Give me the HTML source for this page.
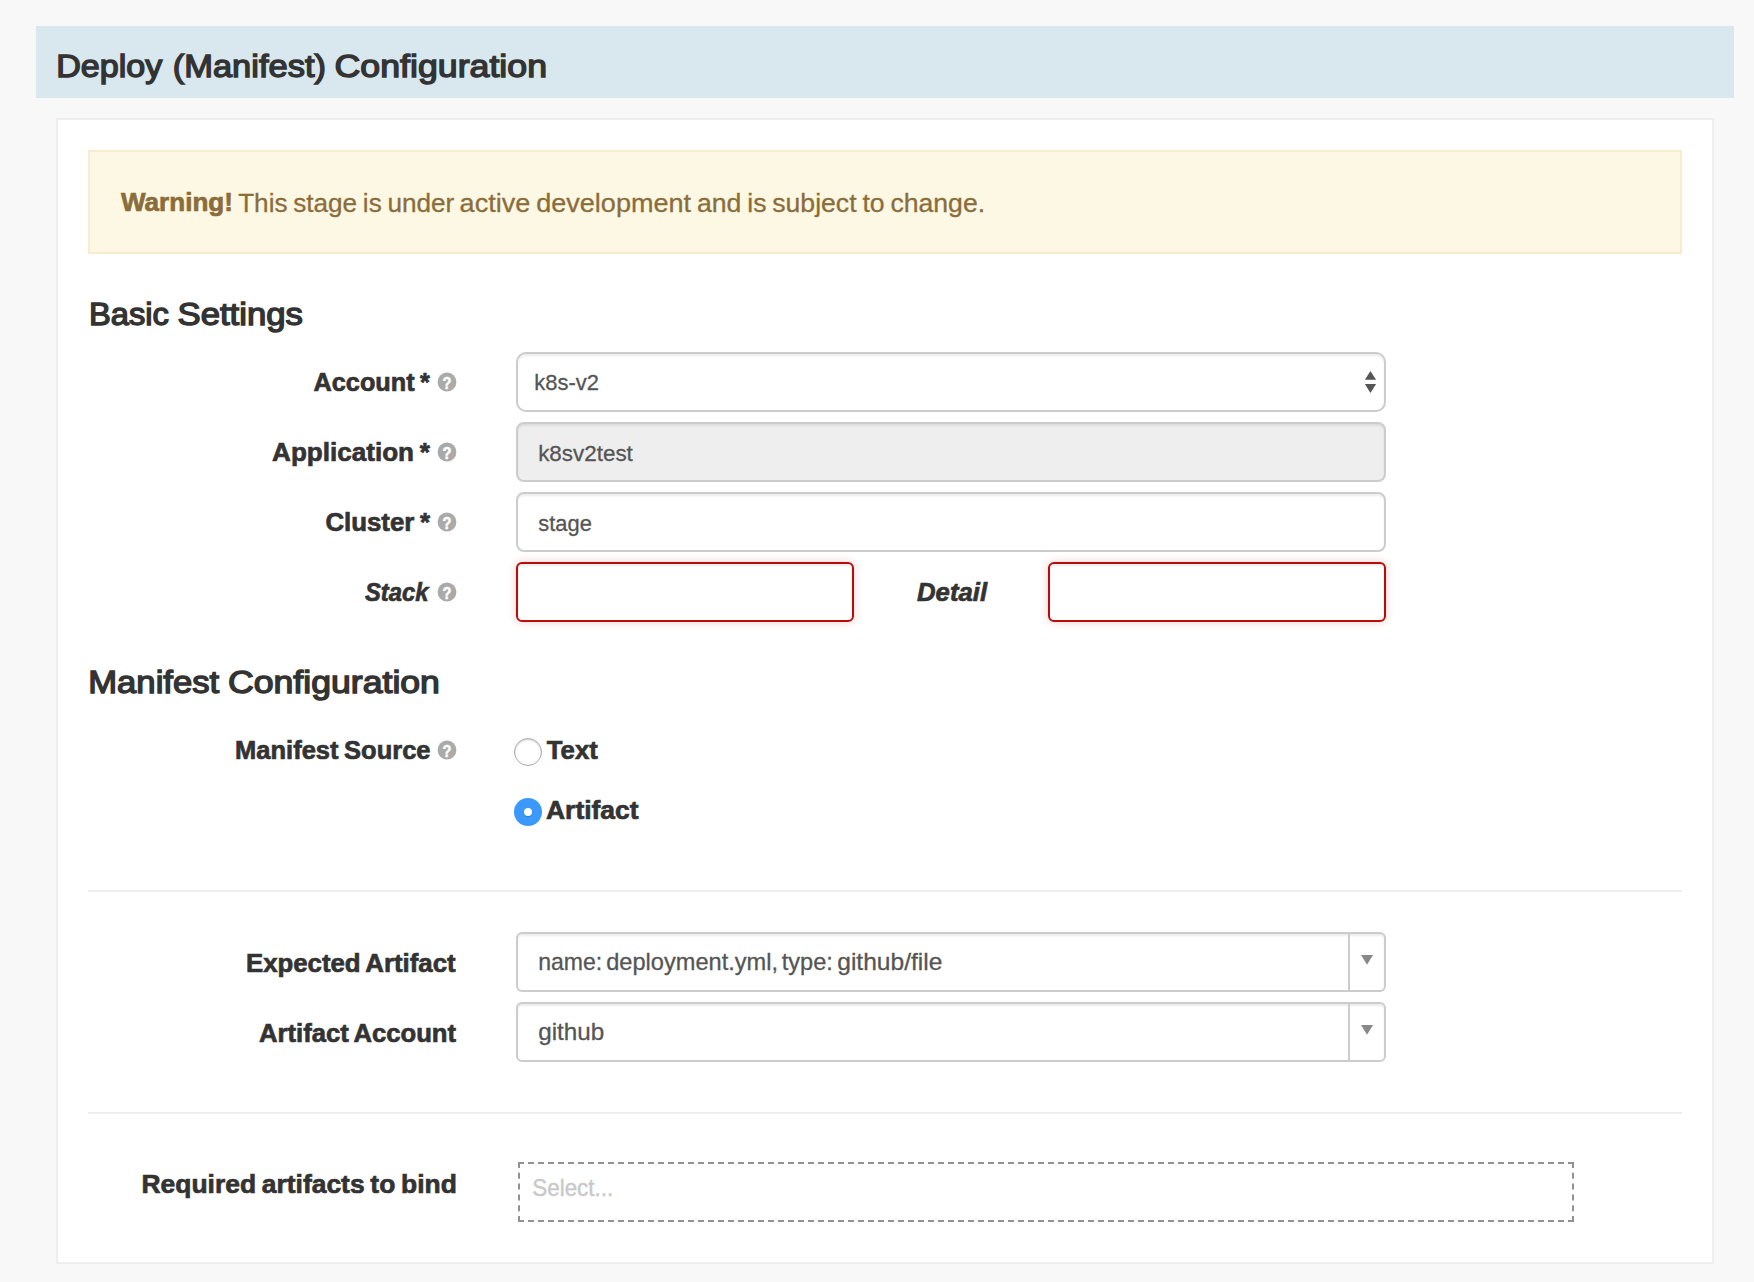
<!DOCTYPE html>
<html lang="en">
<head>
<meta charset="utf-8">
<title>Deploy (Manifest) Configuration</title>
<style>
html,body{margin:0;padding:0;}
body{width:1754px;height:1282px;overflow:hidden;background:#f8f8f8;position:relative;font-family:"Liberation Sans",sans-serif;}
.abs,.t,.help{position:absolute;}
.t{white-space:nowrap;transform-origin:0 50%;word-spacing:-0.06em;}
.bar{left:36px;top:26px;width:1698px;height:72px;background:#d9e8ee;}
.panel{left:56px;top:118px;width:1654px;height:1142px;background:#fff;border:2px solid #eee;}
.alert{left:88px;top:150px;width:1590px;height:100px;background:#fdf8e4;border:2px solid #faebcc;}
.inp{box-sizing:border-box;height:60px;background:#fff;border:2px solid #ccc;border-radius:8px;box-shadow:inset 0 2px 2px rgba(0,0,0,.075);}
.inp.dis{background:#eee;}
.inp.sel{border-radius:10px;}
.inp.err{border-color:#b80c09;border-radius:6px;box-shadow:inset 0 2px 2px rgba(0,0,0,.075),0 0 9px rgba(200,20,20,.22);}
.inp.ui{border-radius:6px;}
.div{width:2px;height:56px;background:#ccc;}
.hr{left:88px;width:1594px;height:2px;background:#eee;}
.dash{box-sizing:border-box;left:518px;top:1162px;width:1056px;height:60px;border:2px dashed #929292;background:#fff;}
.radio{box-sizing:border-box;width:28px;height:28px;border-radius:50%;}
.radio.off{border:1.5px solid #a9a9a9;background:#fff;box-shadow:inset 0 1px 2px rgba(0,0,0,.2);}
.radio.on{background:#3b99fc;}
.radio.on i{position:absolute;left:9.7px;top:9.7px;width:8.6px;height:8.6px;border-radius:50%;background:#fff;box-shadow:0 1px 1px rgba(0,0,0,.2);}
svg{display:block;overflow:visible;}
</style>
</head>
<body>
<div class="abs bar"></div>
<div class="abs panel"></div>
<div class="abs alert"></div>

<div class="abs inp sel" style="left:516px;top:352px;width:870px;"></div>
<svg class="abs" style="left:1364px;top:370px" width="13" height="24" viewBox="0 0 13 24"><path d="M6.4 0.9 L12.1 9.8 L0.9 9.8 Z M0.9 14.1 L12.1 14.1 L6.4 23 Z" fill="#555"/></svg>
<div class="abs inp dis" style="left:516px;top:422px;width:870px;"></div>
<div class="abs inp" style="left:516px;top:492px;width:870px;"></div>
<div class="abs inp err" style="left:516px;top:562px;width:338px;"></div>
<div class="abs inp err" style="left:1048px;top:562px;width:338px;"></div>

<div class="abs radio off" style="left:514px;top:738px;"></div>
<div class="abs radio on" style="left:514px;top:798px;"><i></i></div>

<div class="abs hr" style="top:890px;"></div>

<div class="abs inp ui" style="left:516px;top:932px;width:870px;"></div>
<div class="abs div" style="left:1348px;top:934px;"></div>
<svg class="abs" style="left:1360px;top:954px" width="14" height="12" viewBox="0 0 14 12"><path d="M1 1.1 L13.1 1.1 L7 10.8 Z" fill="#888"/></svg>
<div class="abs inp ui" style="left:516px;top:1002px;width:870px;"></div>
<div class="abs div" style="left:1348px;top:1004px;"></div>
<svg class="abs" style="left:1360px;top:1024px" width="14" height="12" viewBox="0 0 14 12"><path d="M1 1.1 L13.1 1.1 L7 10.8 Z" fill="#888"/></svg>

<div class="abs hr" style="top:1112px;"></div>
<div class="abs dash"></div>

<svg class="help" style="left:436.8px;top:372.3px" width="20" height="20" viewBox="0 0 20 20"><circle cx="10" cy="10" r="9.4" fill="#aaa"/><text x="10" y="17" text-anchor="middle" transform="translate(10 0) scale(0.86 1) translate(-10 0)" font-family="Liberation Sans, sans-serif" font-weight="bold" font-size="17" fill="#fff" stroke="#fff" stroke-width="0.55">?</text></svg>
<svg class="help" style="left:436.8px;top:442.3px" width="20" height="20" viewBox="0 0 20 20"><circle cx="10" cy="10" r="9.4" fill="#aaa"/><text x="10" y="17" text-anchor="middle" transform="translate(10 0) scale(0.86 1) translate(-10 0)" font-family="Liberation Sans, sans-serif" font-weight="bold" font-size="17" fill="#fff" stroke="#fff" stroke-width="0.55">?</text></svg>
<svg class="help" style="left:436.8px;top:512.3px" width="20" height="20" viewBox="0 0 20 20"><circle cx="10" cy="10" r="9.4" fill="#aaa"/><text x="10" y="17" text-anchor="middle" transform="translate(10 0) scale(0.86 1) translate(-10 0)" font-family="Liberation Sans, sans-serif" font-weight="bold" font-size="17" fill="#fff" stroke="#fff" stroke-width="0.55">?</text></svg>
<svg class="help" style="left:436.8px;top:582.3px" width="20" height="20" viewBox="0 0 20 20"><circle cx="10" cy="10" r="9.4" fill="#aaa"/><text x="10" y="17" text-anchor="middle" transform="translate(10 0) scale(0.86 1) translate(-10 0)" font-family="Liberation Sans, sans-serif" font-weight="bold" font-size="17" fill="#fff" stroke="#fff" stroke-width="0.55">?</text></svg>
<svg class="help" style="left:436.8px;top:740.3px" width="20" height="20" viewBox="0 0 20 20"><circle cx="10" cy="10" r="9.4" fill="#aaa"/><text x="10" y="17" text-anchor="middle" transform="translate(10 0) scale(0.86 1) translate(-10 0)" font-family="Liberation Sans, sans-serif" font-weight="bold" font-size="17" fill="#fff" stroke="#fff" stroke-width="0.55">?</text></svg>

<span class="t" id="t_title1" style="left:56px;top:47px;font-size:32.0px;line-height:38.4px;color:#333;transform:translate(0.25px,0.00px) scaleX(1.0652);-webkit-text-stroke:1.4px #333;">Deploy</span>
<span class="t" id="t_title2" style="left:172px;top:47px;font-size:32.0px;line-height:38.4px;color:#333;transform:translate(0.75px,0.00px) scaleX(1.0768);-webkit-text-stroke:1.4px #333;">(Manifest)</span>
<span class="t" id="t_title3" style="left:334px;top:47px;font-size:32.0px;line-height:38.4px;color:#333;transform:translate(0.50px,0.00px) scaleX(1.1164);-webkit-text-stroke:1.4px #333;">Configuration</span>
<span class="t" id="t_warn1" style="left:121px;top:187px;font-size:26.4px;line-height:31.7px;color:#8a6d3b;transform:translate(0.00px,0.00px) scaleX(0.9870);-webkit-text-stroke:0.7px #8a6d3b;"><b>Warning!</b></span>
<span class="t" id="t_warn2" style="left:238px;top:188px;font-size:26.4px;line-height:31.7px;color:#8a6d3b;transform:translate(0.15px,0.00px) scaleX(0.9902);-webkit-text-stroke:0.3px #8a6d3b;">This stage is under</span>
<span class="t" id="t_warn3" style="left:459px;top:188px;font-size:26.4px;line-height:31.7px;color:#8a6d3b;transform:translate(0.60px,0.00px) scaleX(1.0253);-webkit-text-stroke:0.3px #8a6d3b;">active development</span>
<span class="t" id="t_warn4" style="left:697px;top:188px;font-size:26.4px;line-height:31.7px;color:#8a6d3b;transform:translate(0.00px,0.00px) scaleX(1.0087);-webkit-text-stroke:0.3px #8a6d3b;">and is subject to change.</span>
<span class="t" id="t_basic1" style="left:89px;top:295px;font-size:32.0px;line-height:38.4px;color:#333;transform:translate(0.00px,0.00px) scaleX(1.0217);-webkit-text-stroke:1.4px #333;">Basic</span>
<span class="t" id="t_basic2" style="left:177px;top:295px;font-size:32.0px;line-height:38.4px;color:#333;transform:translate(0.50px,0.00px) scaleX(1.0848);-webkit-text-stroke:1.4px #333;">Settings</span>
<span class="t" id="t_account" style="left:313px;top:367px;font-size:26.4px;line-height:31.7px;color:#333;transform:translate(0.60px,0.00px) scaleX(0.9567);font-weight:bold;-webkit-text-stroke:0.7px #333;">Account *</span>
<span class="t" id="t_app" style="left:272px;top:437px;font-size:26.4px;line-height:31.7px;color:#333;transform:translate(0.10px,0.00px) scaleX(0.9875);font-weight:bold;-webkit-text-stroke:0.7px #333;">Application *</span>
<span class="t" id="t_cluster" style="left:325px;top:507px;font-size:26.4px;line-height:31.7px;color:#333;transform:translate(0.40px,0.00px) scaleX(0.9778);font-weight:bold;-webkit-text-stroke:0.7px #333;">Cluster *</span>
<span class="t" id="t_stack" style="left:364px;top:577px;font-size:26.4px;line-height:31.7px;color:#333;transform:translate(0.95px,0.00px) scaleX(0.9002);font-weight:bold;font-style:italic;-webkit-text-stroke:0.7px #333;">Stack</span>
<span class="t" id="t_detail" style="left:917px;top:577px;font-size:26.4px;line-height:31.7px;color:#333;transform:translate(0.05px,0.00px) scaleX(0.9740);font-weight:bold;font-style:italic;-webkit-text-stroke:0.7px #333;">Detail</span>
<span class="t" id="t_k8s" style="left:534px;top:369px;font-size:22.6px;line-height:27.1px;color:#555;transform:translate(0.30px,0.00px) scaleX(0.9715);-webkit-text-stroke:0.3px #555;">k8s-v2</span>
<span class="t" id="t_k8sv2test" style="left:538px;top:440px;font-size:22.6px;line-height:27.1px;color:#555;transform:translate(0.15px,0.00px) scaleX(0.9920);-webkit-text-stroke:0.3px #555;">k8sv2test</span>
<span class="t" id="t_stage" style="left:538px;top:510px;font-size:22.6px;line-height:27.1px;color:#555;transform:translate(0.35px,0.00px) scaleX(0.9676);-webkit-text-stroke:0.3px #555;">stage</span>
<span class="t" id="t_manifest1" style="left:88px;top:663px;font-size:32.0px;line-height:38.4px;color:#333;transform:translate(0.25px,0.00px) scaleX(1.0825);-webkit-text-stroke:1.4px #333;">Manifest</span>
<span class="t" id="t_manifest2" style="left:228px;top:663px;font-size:32.0px;line-height:38.4px;color:#333;transform:translate(0.00px,0.00px) scaleX(1.1134);-webkit-text-stroke:1.4px #333;">Configuration</span>
<span class="t" id="t_msrc" style="left:235px;top:735px;font-size:26.4px;line-height:31.7px;color:#333;transform:translate(0.10px,0.00px) scaleX(0.9660);font-weight:bold;-webkit-text-stroke:0.7px #333;">Manifest Source</span>
<span class="t" id="t_text" style="left:546px;top:735px;font-size:26.4px;line-height:31.7px;color:#333;transform:translate(0.80px,0.00px) scaleX(0.9740);font-weight:bold;-webkit-text-stroke:0.7px #333;">Text</span>
<span class="t" id="t_artifact" style="left:546px;top:795px;font-size:26.4px;line-height:31.7px;color:#333;transform:translate(0.00px,0.00px) scaleX(1.0022);font-weight:bold;-webkit-text-stroke:0.7px #333;">Artifact</span>
<span class="t" id="t_expected" style="left:245px;top:948px;font-size:26.4px;line-height:31.7px;color:#333;transform:translate(0.95px,0.00px) scaleX(0.9773);font-weight:bold;-webkit-text-stroke:0.7px #333;">Expected Artifact</span>
<span class="t" id="t_aacct" style="left:259px;top:1018px;font-size:26.4px;line-height:31.7px;color:#333;transform:translate(0.05px,0.00px) scaleX(0.9717);font-weight:bold;-webkit-text-stroke:0.7px #333;">Artifact Account</span>
<span class="t" id="t_name1" style="left:538px;top:948px;font-size:23.8px;line-height:28.6px;color:#555;transform:translate(0.25px,0.00px) scaleX(0.9674);-webkit-text-stroke:0.3px #555;">name:</span>
<span class="t" id="t_name2" style="left:606px;top:948px;font-size:23.8px;line-height:28.6px;color:#555;transform:translate(0.25px,0.00px) scaleX(0.9913);-webkit-text-stroke:0.3px #555;">deployment.yml,</span>
<span class="t" id="t_name3" style="left:781px;top:948px;font-size:23.8px;line-height:28.6px;color:#555;transform:translate(0.75px,0.00px) scaleX(0.9898);-webkit-text-stroke:0.3px #555;">type:</span>
<span class="t" id="t_name4" style="left:837px;top:948px;font-size:23.8px;line-height:28.6px;color:#555;transform:translate(0.25px,0.00px) scaleX(1.0318);-webkit-text-stroke:0.3px #555;">github/file</span>
<span class="t" id="t_github" style="left:538px;top:1018px;font-size:23.8px;line-height:28.6px;color:#555;transform:translate(0.15px,0.00px) scaleX(1.0195);-webkit-text-stroke:0.3px #555;">github</span>
<span class="t" id="t_required" style="left:141px;top:1169px;font-size:26.4px;line-height:31.7px;color:#333;transform:translate(0.50px,0.00px) scaleX(1.0014);font-weight:bold;-webkit-text-stroke:0.7px #333;">Required artifacts to bind</span>
<span class="t" id="t_select" style="left:532px;top:1173px;font-size:24.5px;line-height:29.4px;color:#c8c8c8;transform:translate(0.30px,0.00px) scaleX(0.9131);-webkit-text-stroke:0.4px #c8c8c8;">Select...</span>
</body>
</html>
